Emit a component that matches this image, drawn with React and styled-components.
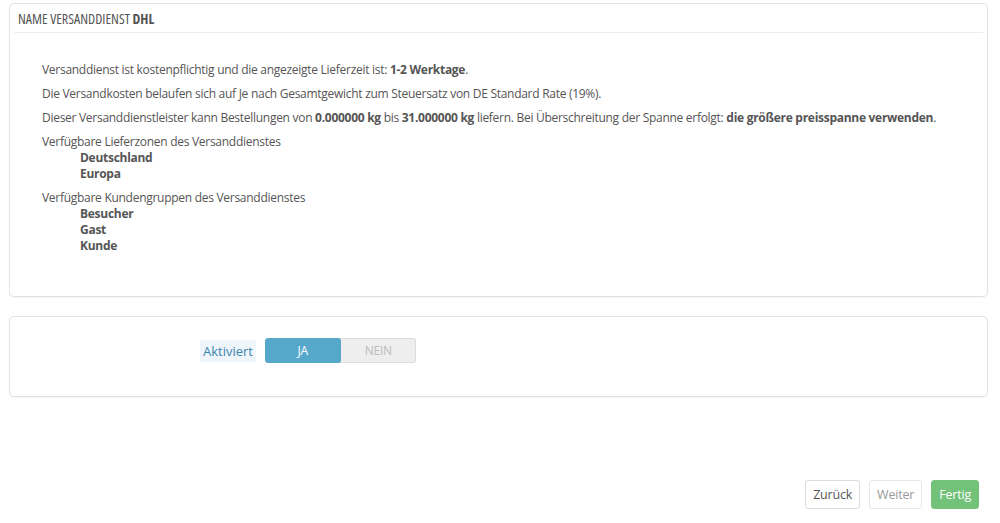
import React from "react";
import styled, { createGlobalStyle } from "styled-components";

const Global = createGlobalStyle`
  html, body { margin: 0; padding: 0; background: #fff; }
  body { font-family: "Open Sans", "Liberation Sans", sans-serif; font-size: 12px; color: #555; letter-spacing: -0.28px; }
  * { box-sizing: border-box; }
`;

const Page = styled.div`
  width: 1000px;
  height: 523px;
  padding: 3px 12px 0 9px;
  display: flex;
  flex-direction: column;
`;

const Panel = styled.div`
  border: 1px solid #e3e3e3;
  border-radius: 5px;
  box-shadow: 0 1px 1px rgba(0,0,0,0.04);
  background: #fff;
  padding: 0 4px;
  margin-bottom: ${(p) => p.$mb || 0}px;
  height: ${(p) => p.$h}px;
`;

const Heading = styled.div`
  height: 29px;
  border-bottom: 1px solid #eee;
  display: flex;
  align-items: center;
  padding-left: 4px;
  font-size: 14px;
  font-stretch: condensed;
  letter-spacing: 0;
  text-transform: uppercase;
  color: #555;
  b { font-weight: 700; }
`;

const Body = styled.div`
  padding: 29px 0 0 28px;
  line-height: 16px;
`;

const Line = styled.div`
  margin-bottom: 8px;
  b { font-weight: 700; color: #555; }
`;

const SubItem = styled.div`
  padding-left: 38px;
  font-weight: 700;
`;

const FormRow = styled.div`
  display: flex;
  align-items: center;
  height: 100%;
  padding-bottom: 12px;
`;

const LabelCol = styled.div`
  width: 242px;
  display: flex;
  justify-content: flex-end;
`;

const Tag = styled.span`
  background: #eef6fb;
  color: #3d85ad;
  font-size: 13px;
  letter-spacing: 0;
  padding: 2px 3px;
  border-radius: 3px;
  line-height: 18px;
`;

const Switch = styled.div`
  margin-left: 9px;
  display: flex;
  width: 151px;
  height: 25px;
  border-radius: 3px;
  background: #eee;
  box-shadow: inset 0 0 0 1px #ddd;
  overflow: hidden;
`;

const SwitchOpt = styled.div`
  flex: 1;
  display: flex;
  align-items: center;
  justify-content: center;
  font-size: 12px;
  background: ${(p) => (p.$on ? "#56a8ca" : "transparent")};
  color: ${(p) => (p.$on ? "#fff" : "#bbb")};
  border-radius: 3px;
`;

const Footer = styled.div`
  margin-top: auto;
  margin-bottom: 14px;
  display: flex;
  justify-content: flex-end;
  gap: 9px;
  padding-right: 9px;
`;

const Btn = styled.button`
  font-family: inherit;
  font-size: 12.5px;
  letter-spacing: -0.2px;
  height: 29px;
  padding: 0 7px;
  border-radius: 3px;
  border: 1px solid ${(p) => (p.$variant === "success" ? "#72c279" : p.$variant === "disabled" ? "#e8e8e8" : "#dcdcdc")};
  background: ${(p) => (p.$variant === "success" ? "#72c279" : "#fff")};
  color: ${(p) => (p.$variant === "success" ? "#fff" : p.$variant === "disabled" ? "#999" : "#555")};
`;

export default function App() {
  return (
    <>
      <Global />
      <Page>
        <Panel $h={294} $mb={19}>
          <Heading>
            Name Versanddienst&nbsp;<b>DHL</b>
          </Heading>
          <Body>
            <Line>
              Versanddienst ist kostenpflichtig und die angezeigte Lieferzeit ist: <b>1-2 Werktage</b>.
            </Line>
            <Line>
              Die Versandkosten belaufen sich auf Je nach Gesamtgewicht zum Steuersatz von DE Standard Rate (19%).
            </Line>
            <Line>
              Dieser Versanddienstleister kann Bestellungen von <b>0.000000 kg</b> bis <b>31.000000 kg</b> liefern. Bei Überschreitung der Spanne erfolgt: <b>die größere preisspanne verwenden</b>.
            </Line>
            <Line>
              Verfügbare Lieferzonen des Versanddienstes
              <SubItem>Deutschland</SubItem>
              <SubItem>Europa</SubItem>
            </Line>
            <Line>
              Verfügbare Kundengruppen des Versanddienstes
              <SubItem>Besucher</SubItem>
              <SubItem>Gast</SubItem>
              <SubItem>Kunde</SubItem>
            </Line>
          </Body>
        </Panel>
        <Panel $h={81}>
          <FormRow>
            <LabelCol>
              <Tag>Aktiviert</Tag>
            </LabelCol>
            <Switch>
              <SwitchOpt $on>JA</SwitchOpt>
              <SwitchOpt>NEIN</SwitchOpt>
            </Switch>
          </FormRow>
        </Panel>
        <Footer>
          <Btn>Zurück</Btn>
          <Btn $variant="disabled">Weiter</Btn>
          <Btn $variant="success">Fertig</Btn>
        </Footer>
      </Page>
    </>
  );
}
